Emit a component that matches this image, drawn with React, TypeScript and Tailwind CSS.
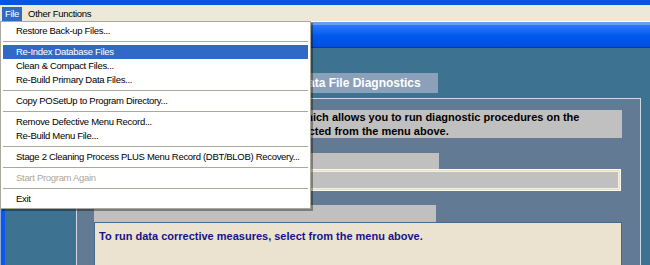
import React from 'react';

type Item = { label?: string; sep?: boolean; active?: boolean; disabled?: boolean };

const menuItems: Item[] = [
  { label: 'Restore Back-up Files...' },
  { sep: true },
  { label: 'Re-Index Database Files', active: true },
  { label: 'Clean & Compact Files...' },
  { label: 'Re-Build Primary Data Files...' },
  { sep: true },
  { label: 'Copy POSetUp to Program Directory...' },
  { sep: true },
  { label: 'Remove Defective Menu Record...' },
  { label: 'Re-Build Menu File...' },
  { sep: true },
  { label: 'Stage 2 Cleaning Process PLUS Menu Record (DBT/BLOB) Recovery...' },
  { sep: true },
  { label: 'Start Program Again', disabled: true },
  { sep: true },
  { label: 'Exit' },
];

const FileMenu: React.FC = () => (
  <div className="absolute left-0 top-[21px] w-[311px] border border-[#ACA899] bg-white py-[2px] px-[2px] text-[9.5px] tracking-[-0.3px] shadow-[2px_2px_0_rgba(0,0,0,0.35)]">
    {menuItems.map((it, i) =>
      it.sep ? (
        <div key={i} className="h-[7px] flex items-center">
          <div className="h-px w-full bg-[#ACA899]" />
        </div>
      ) : (
        <div
          key={i}
          className={`h-[14px] flex items-center pl-[13px] whitespace-nowrap ${
            it.active ? 'bg-[#316AC5] text-white' : it.disabled ? 'text-[#ACA899]' : 'text-black'
          }`}
        >
          {it.label}
        </div>
      )
    )}
  </div>
);

export default function App() {
  return (
    <div className="relative w-[650px] h-[265px] overflow-hidden bg-[#3D7391] font-['Liberation_Sans',Arial,sans-serif] text-[9.5px] tracking-[-0.3px] leading-none">
      {/* app title bar remnant */}
      <div className="h-[5px] bg-[#0A52E4]" />

      {/* menu bar */}
      <div className="h-[16px] bg-[#ECE9D8] flex items-end">
        <div className="ml-[2px] h-[14px] px-[3px] flex items-center bg-[#316AC5] text-white">File</div>
        <div className="ml-[6px] h-[14px] flex items-center text-black">Other Functions</div>
      </div>
      <div className="h-px bg-white" />

      {/* child window title bar */}
      <div className="h-[3px] bg-[#6A9CF4]" />
      <div className="h-[22px] bg-linear-to-b from-[#2A7AFA] via-[#0058EE] to-[#0050E0]" />
      <div className="h-px bg-[#0038B8]" />

      {/* body */}
      <div className="flex h-[217px] overflow-hidden tracking-normal">
        <div className="w-px shrink-0 bg-[#8FA8D8]" />
        <div className="w-[4px] shrink-0 bg-[#0A58EE]" />
        <div className="flex flex-col pl-[71px]">
          <div className="shrink-0 ml-[206px] mt-[25px] w-[156px] h-[20px] bg-[#8AA1B9] flex items-center justify-center text-white font-bold text-[12px]">
            Data File Diagnostics
          </div>
          <div className="shrink-0 mt-[5px] w-[565px] h-[180px] border-l border-t border-r border-[#D2D8E0] bg-[#637A94] pl-[17px] pt-[11px]">
            <div className="w-[528px] h-[28px] bg-[#C0C0C0] pl-[5px] text-black font-bold text-[11px] leading-[14px] whitespace-nowrap">
              This screen contains a data file utility which allows you to run diagnostic procedures on the
              <br />
              POS database files. Procedures are selected from the menu above.
            </div>
            <div className="mt-[15px] w-[345px] h-[16px] bg-[#C0C0C0]" />
            <div className="w-[527px] h-[22px] border border-[#FCFAEE] bg-[#E6E0C6] p-px">
              <div className="h-full border border-[#F4F0DC] bg-[#C0C0C0]" />
            </div>
            <div className="mt-[14px] w-[342px] h-[17px] bg-[#C0C0C0]" />
            <div className="w-[528px] h-[60px] border border-[#46698A] bg-[#ECE2D0] pl-[4px] pt-[6px] text-[#14148A] font-bold text-[11px] leading-[14px]">
              To run data corrective measures, select from the menu above.
            </div>
          </div>
        </div>
      </div>

      <FileMenu />
    </div>
  );
}
